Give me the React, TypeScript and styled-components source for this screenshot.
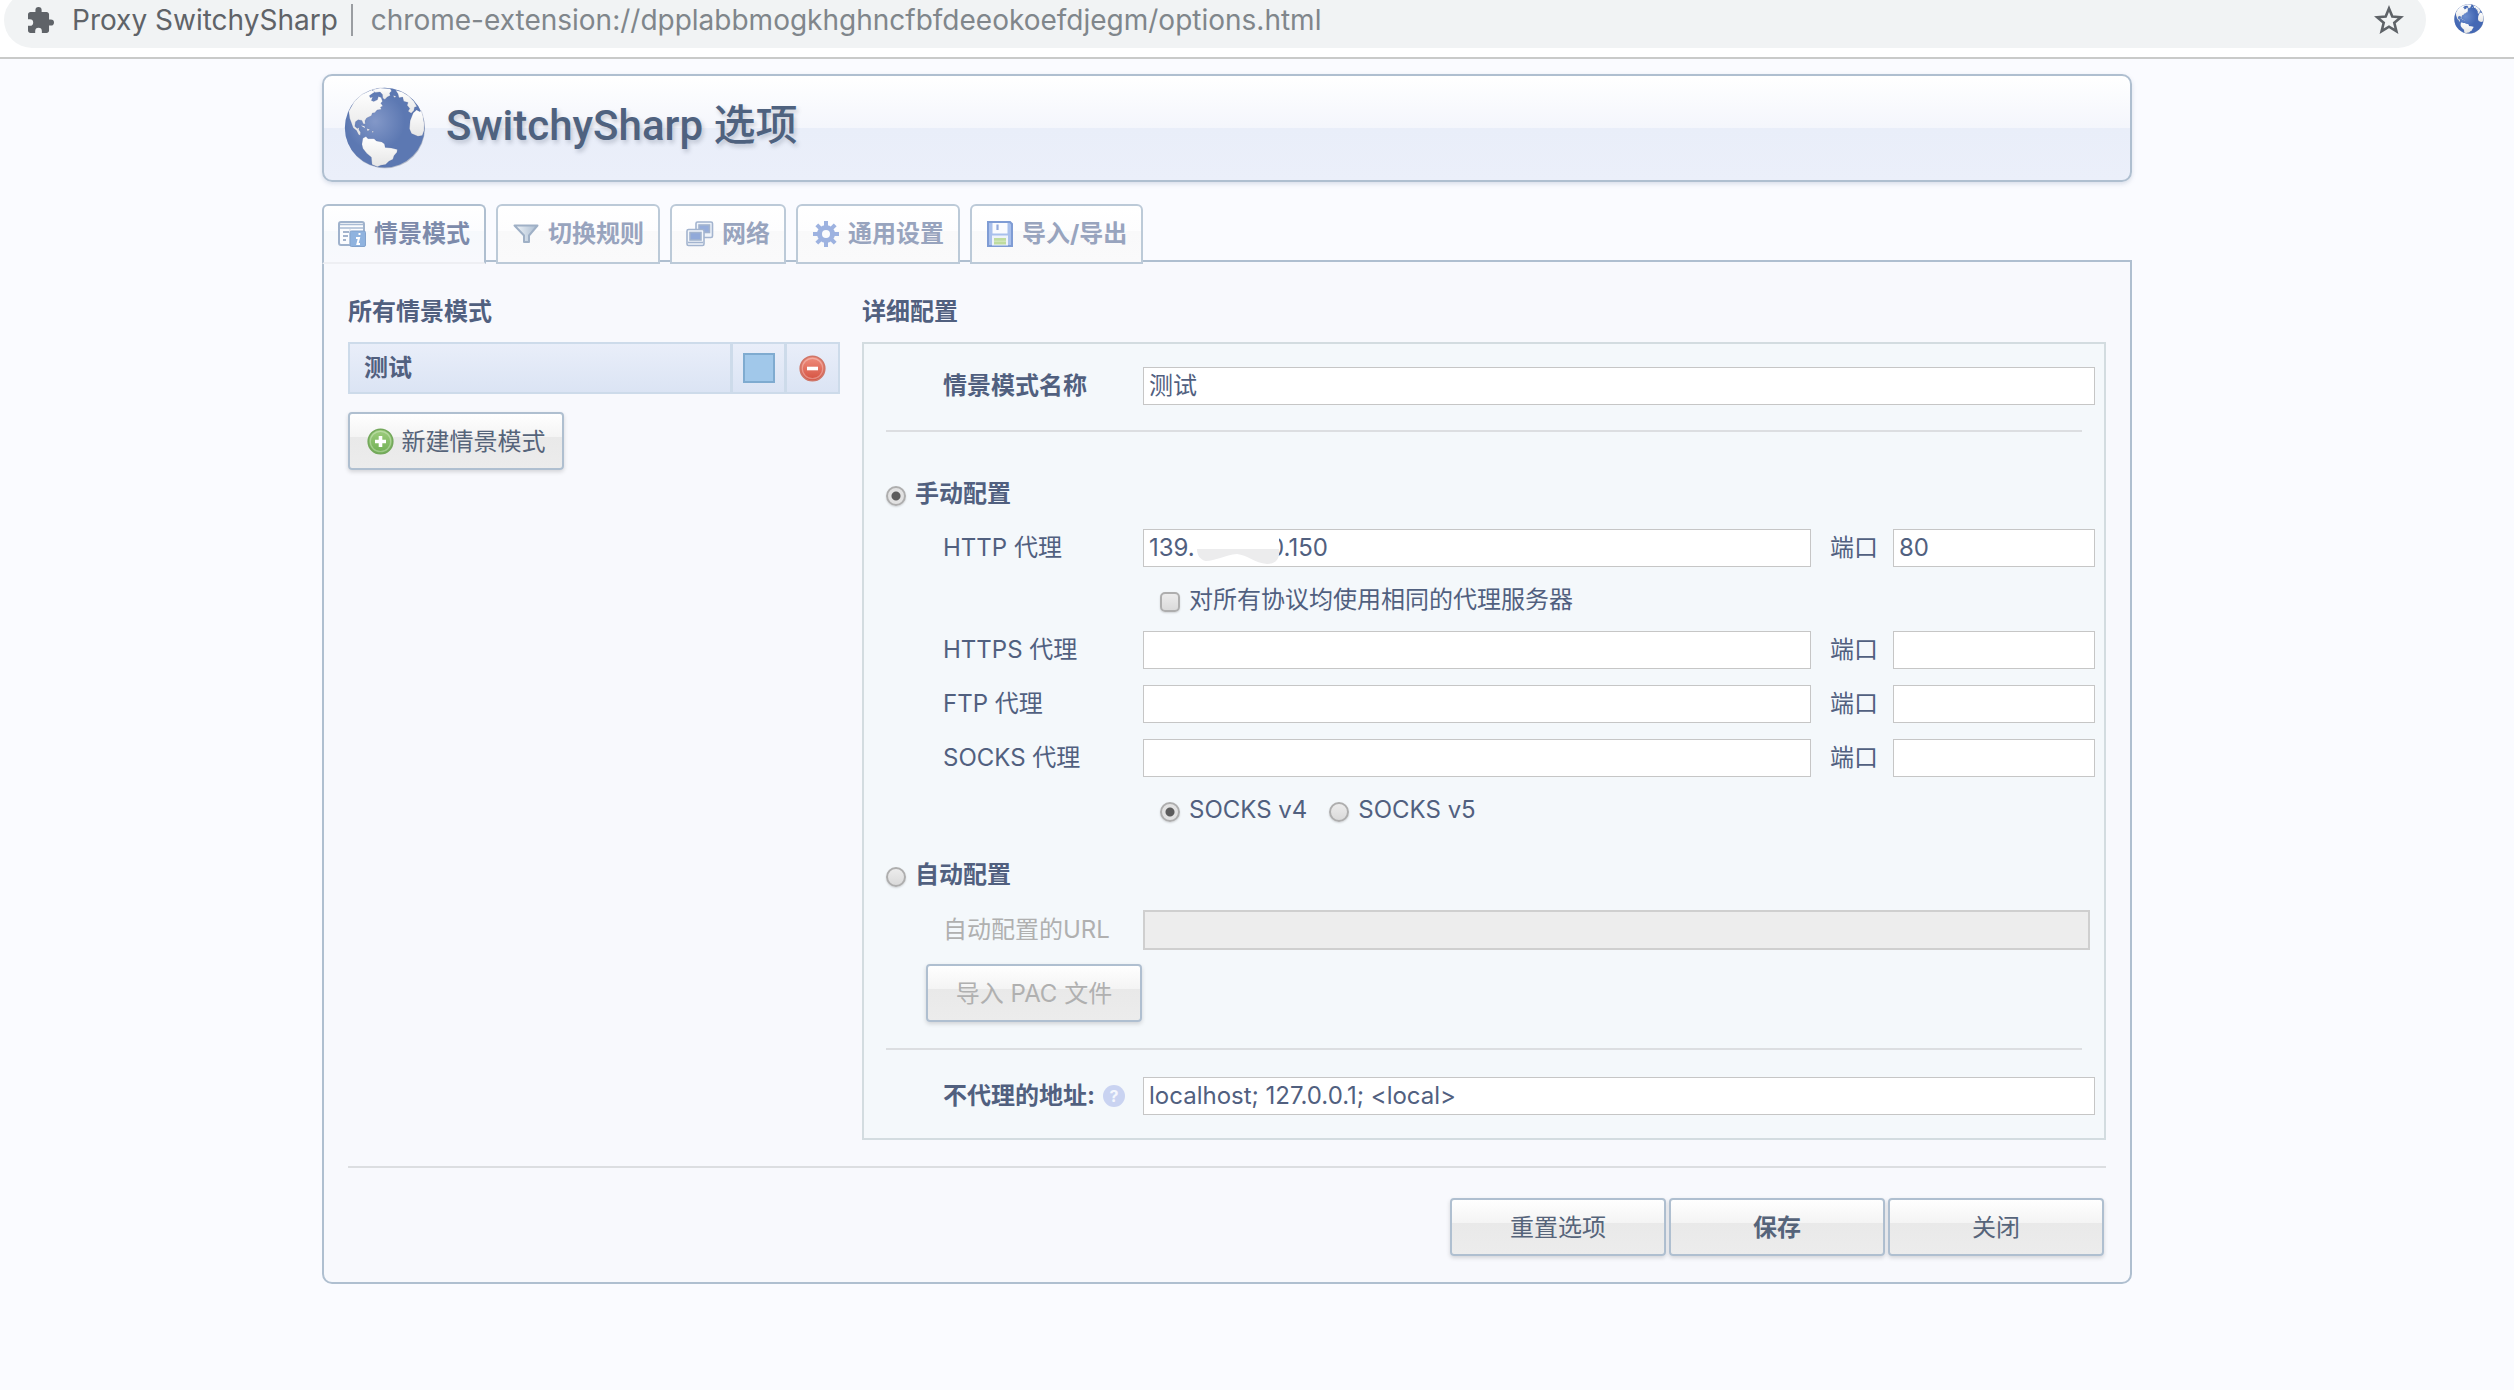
import React, { useState } from "react";
import styled, { createGlobalStyle, css } from "styled-components";

const color = {
  page: "#fafbff",
  panel: "#f8f9fd",
  box: "#f4f8fb",
  line: "#afbfd0",
  rule: "#dcdee1",
  text: "#51607f",
  muted: "#b0b0b0",
};

const Global = createGlobalStyle`
  *, *::before, *::after { box-sizing: border-box; }
  body {
    margin: 0;
    background: ${color.page};
    color: ${color.text};
    font: 24px/38px Inter, "Noto Sans CJK SC", sans-serif;
  }
  button, input { font: inherit; color: inherit; }
`;

/* ---------- browser bar ---------- */

const Toolbar = styled.header`
  display: flex;
  align-items: flex-start;
  height: 59px;
  padding: 0 30px 0 4px;
  gap: 28px;
  overflow: hidden;
  background: #fff;
  border-bottom: 2px solid #c9cac9;
`;

const Omnibox = styled.div`
  flex: 1;
  display: flex;
  align-items: center;
  height: 56px;
  margin-top: -8px;
  padding: 0 22px 0 24px;
  border-radius: 28px;
  background: #f1f3f4;
  color: #5f6368;
  font-size: 28px;
`;

const SiteName = styled.span`
  padding: 0 13px 0 18px;
  white-space: nowrap;
`;

const Address = styled.span`
  flex: 1;
  padding-left: 18px;
  border-left: 2px solid #9a9da1;
  color: #80868b;
  line-height: 32px;
`;

const IconButton = styled.button`
  display: flex;
  align-items: center;
  justify-content: center;
  padding: 0;
  border: 0;
  background: none;
  cursor: pointer;
`;

const ExtensionButton = styled(IconButton)`
  height: 38px;
`;

/* ---------- page ---------- */

const Page = styled.main`
  padding: 15px 382px 106px 322px;
`;

const Banner = styled.div`
  display: flex;
  align-items: center;
  gap: 20px;
  height: 108px;
  padding: 0 20px;
  border: 2px solid ${color.line};
  border-radius: 10px;
  background: linear-gradient(#fff, #f4f6fc 50%, #e9eef9 50%, #ebeffa);
  box-shadow: 0 2px 4px rgba(120, 140, 170, 0.25);
`;

const Title = styled.h1`
  margin: 0 0 4px;
  font: 500 42px/60px Roboto, "Noto Sans CJK SC", sans-serif;
  color: #4f627f;
  text-shadow: 2px 3px 4px rgba(80, 90, 110, 0.28);
`;

const Tabs = styled.div`
  position: relative;
  display: flex;
  gap: 10px;
  margin: 22px 0 -4px;
`;

const Tab = styled.button<{ $active: boolean }>`
  display: flex;
  align-items: center;
  gap: 8px;
  height: 60px;
  padding: 0 14px;
  border: 2px solid #bccad8;
  border-radius: 6px 6px 0 0;
  background: linear-gradient(#fff, #fdfdfe 45%, #f9f9fa 45%, #fafafb);
  color: #98a4be;
  font-weight: 700;
  cursor: pointer;
  ${(p) =>
    p.$active &&
    css`
      border-color: ${color.line};
      border-bottom-color: #eeeff3;
      background: linear-gradient(#fff, #fbfcfe 45%, #f6f9fc 45%, ${color.panel});
      color: #7d8bab;
    `}
`;

const Panel = styled.section`
  padding: 30px 24px 26px;
  border: 2px solid ${color.line};
  border-radius: 0 0 10px 10px;
  background: ${color.panel};
`;

const Columns = styled.div`
  display: grid;
  grid-template-columns: 492px minmax(0, 1fr);
  gap: 22px;
  align-items: start;
`;

const Heading = styled.h2`
  margin: 0 0 10px;
  font-size: 24px;
  line-height: 40px;
  font-weight: 700;
`;

const Rule = styled.hr<{ $top: number; $bottom: number }>`
  height: 2px;
  margin: ${(p) => p.$top}px 0 ${(p) => p.$bottom}px;
  border: 0;
  background: ${color.rule};
`;

/* ---------- profile list ---------- */

const ProfileRow = styled.div`
  display: flex;
  height: 52px;
  margin-bottom: 18px;
  border: 2px solid #cddbea;
  background: linear-gradient(#e9eef9, #dbe4f4);
`;

const ProfileName = styled.div`
  flex: 1;
  padding: 0 14px;
  line-height: 48px;
  font-weight: 700;
`;

const ProfileCell = styled.div`
  display: flex;
  align-items: center;
  justify-content: center;
  width: 54px;
  border-left: 3px solid #cddbea;
`;

const Swatch = styled.button`
  width: 32px;
  height: 30px;
  padding: 0;
  border: 2px solid #7fabd0;
  background: #a1c8ea;
  cursor: pointer;
`;

const Button = styled.button<{ $strong?: boolean }>`
  display: flex;
  align-items: center;
  justify-content: center;
  gap: 8px;
  width: 216px;
  height: 58px;
  padding: 1px 0 0;
  border: 2px solid ${color.line};
  border-radius: 4px;
  background: linear-gradient(#fff, #f4f4f4 42%, #e9e9e9 42%, #ececec);
  box-shadow: 0 2px 4px rgba(0, 0, 0, 0.15);
  color: #56647a;
  font-weight: ${(p) => (p.$strong ? 700 : 400)};
  cursor: pointer;
  &:disabled {
    color: ${color.muted};
    cursor: default;
  }
`;

/* ---------- profile details ---------- */

const Details = styled.form`
  padding: 23px 9px 23px 22px;
  border: 2px solid #d3dce0;
  background: ${color.box};
  & > hr {
    margin-right: 13px;
  }
`;

const Row = styled.div<{ $port?: boolean }>`
  display: grid;
  grid-template-columns: ${(p) => (p.$port ? "200px minmax(0, 1fr) 82px 202px" : "200px minmax(0, 1fr)")};
  align-items: center;
  margin-bottom: ${(p) => (p.$port ? 16 : 0)}px;
  padding-left: 57px;
`;

const Label = styled.label<{ $strong?: boolean; $muted?: boolean }>`
  font-weight: ${(p) => (p.$strong ? 700 : 400)};
  color: ${(p) => (p.$muted ? color.muted : color.text)};
  white-space: nowrap;
`;

const PortLabel = styled(Label)`
  padding-left: 19px;
`;

const LabelGroup = styled.div`
  display: flex;
  align-items: center;
  gap: 8px;
`;

const Help = styled.button`
  width: 22px;
  height: 22px;
  padding: 0;
  border: 0;
  border-radius: 50%;
  background: #c9d3f1;
  color: #f4f7fd;
  font-size: 16px;
  line-height: 22px;
  font-weight: 700;
  cursor: help;
`;

const TextInput = styled.input`
  width: 100%;
  height: 38px;
  padding: 0 5px;
  border: 1px solid #c6c6c6;
  border-radius: 0;
  background: #fff;
  outline: 0;
  &:disabled {
    height: 40px;
    border: 2px solid #cfcfcf;
    background: #ededed;
  }
`;

const UrlRow = styled(Row)`
  margin: 16px 0 14px;
  padding-right: 5px;
`;

const Masked = styled.div`
  position: relative;
  display: flex;
`;

const Smudge = styled.svg`
  position: absolute;
  left: 54px;
  top: 5px;
`;

const ModeRow = styled.div<{ $top: number }>`
  display: flex;
  align-items: center;
  gap: 9px;
  margin: ${(p) => p.$top}px 0 16px;
`;

const ChoiceRow = styled.div`
  display: flex;
  gap: 22px;
  height: 34px;
  margin-bottom: 14px;
  padding-left: 274px;
  line-height: 34px;
`;

const Choice = styled.div`
  display: flex;
  align-items: center;
  gap: 9px;
`;

const tick = css`
  appearance: none;
  flex: none;
  width: 20px;
  height: 20px;
  margin: 4px 0 0;
  border: 2px solid #aeaeae;
  background: linear-gradient(#ececec, #dadada);
  box-shadow: 0 1px 2px rgba(0, 0, 0, 0.15);
`;

const Radio = styled.input.attrs({ type: "radio" })`
  ${tick}
  border-radius: 50%;
  &:checked {
    background: radial-gradient(circle, #5c5c5c 4px, #e2e2e2 5px);
  }
`;

const Checkbox = styled.input.attrs({ type: "checkbox" })`
  ${tick}
  border-radius: 5px;
  &:checked {
    background: #8d8d8d;
  }
`;

const ImportButton = styled(Button)`
  margin-left: 40px;
`;

const Actions = styled.div`
  display: flex;
  justify-content: flex-end;
  gap: 3px;
  padding-right: 2px;
`;

/* ---------- drawings ---------- */

function Globe({ size, id, tone }: { size: number; id: string; tone: [string, string] }) {
  return (
    <svg width={size} height={size} viewBox="43 24 243 243" aria-hidden="true">
      <defs>
        <radialGradient id={id} cx="38%" cy="42%" r="62%">
          <stop offset="0" stopColor={tone[0]} />
          <stop offset="0.6" stopColor={tone[1]} />
          <stop offset="1" stopColor={tone[1]} />
        </radialGradient>
        <linearGradient id={id + "-land"} x1="0" y1="0" x2="0" y2="1">
          <stop offset="0" stopColor="#fff" />
          <stop offset="1" stopColor="#e6e6e6" />
        </linearGradient>
      </defs>
      <circle cx="165" cy="147" r="118" fill="#8b94a8" opacity="0.6" />
      <circle cx="163.500" cy="144.500" r="118" fill={`url(#${id})`} />
      <g fill={`url(#${id}-land)`} stroke="#46588a" strokeOpacity="0.35" strokeWidth="1.500">
        <path d="M57 96 74 66 96 46 124 33 137 37 126 44 118 50 121 56 128 54 124 64 131 67 142 62 145 52 153 55 157 66 152 72 158 80 151 84 154 90 141 92 134 100 127 101 124 109 110 116 105 124 106 134 100 133 96 123 85 121 77 127 75 140 82 147 88 144 87 151 92 158 91 168 86 165 80 153 70 145 64 128 60 117Z" />
        <path d="M126 32 150 27 180 29 184 36 178 42 180 49 171 54 164 61 158 57 157 46 150 39 136 40Z" />
        <path d="M196 34 214 38 234 50 250 66 259 82 252 84 250 94 242 102 233 96 238 88 230 78 233 70 220 66 217 54 206 56 203 44Z" />
        <path d="M188 50 197 51 194 56Z" />
        <path d="M248 101 258 92 268 97 272 94 277 110 281 135 280 154 275 168 262 170 243 162 237 148 239 124Z" />
        <path d="M99 176 108 171 114 177 132 177 139 184 155 187 163 193 165 203 183 205 201 209 200 217 191 228 188 238 176 244 166 254 152 256 142 260 126 254 124 232 110 220 99 206 96 194Z" />
        <path d="M93 137 104 140 106 146 98 142ZM110 147 120 150 113 155ZM125 154 131 156 128 160Z" />
      </g>
    </svg>
  );
}

const PuzzleIcon = () => (
  <svg width="26" height="26" viewBox="2 1 21 21" fill="#5f6368" aria-hidden="true">
    <path d="M20.500 11H19V7c0-1.100-.9-2-2-2h-4V3.500a2.500 2.500 0 0 0-5 0V5H4c-1.100 0-2 .9-2 2v3.800h1.500a2.700 2.700 0 0 1 0 5.400H2V20c0 1.100.9 2 2 2h3.800v-1.500a2.700 2.700 0 0 1 5.400 0V22H17c1.100 0 2-.9 2-2v-4h1.500a2.500 2.500 0 0 0 0-5z" />
  </svg>
);

const StarIcon = () => (
  <svg width="30" height="30" viewBox="0 0 30 30" aria-hidden="true">
    <path
      d="M15 3.500l3.300 8 8.600.7-6.600 5.600 2.100 8.400L15 21.700l-7.400 4.500 2.100-8.400-6.600-5.600 8.600-.7z"
      fill="none"
      stroke="#5f6368"
      strokeWidth="2.600"
    />
  </svg>
);

const ProfileIcon = () => (
  <svg width="28" height="26" viewBox="0 0 28 26" aria-hidden="true">
    <rect x="1" y="1" width="25" height="23" rx="2" fill="#fbfcfe" stroke="#9fb2cc" strokeWidth="2" />
    <path d="M2 3.500h23M2 7h23" stroke="#a9bbd4" strokeWidth="1.500" />
    <path d="M5 11h6M5 15h5M5 19h3" stroke="#a3b3cc" strokeWidth="1.800" />
    <path d="M12 8v16" stroke="#cdd8e6" />
    <rect x="12" y="10" width="15.500" height="15.500" rx="1.500" fill="#8fb3df" stroke="#83a3cc" />
    <path d="M20.500 13h2M18 17h3l-1.600 6h2.600" fill="none" stroke="#fff" strokeWidth="2" />
  </svg>
);

const FilterIcon = () => (
  <svg width="28" height="26" viewBox="0 0 28 26" aria-hidden="true">
    <defs>
      <linearGradient id="funnel">
        <stop offset="0" stopColor="#f2f6fa" />
        <stop offset="1" stopColor="#a9bbd0" />
      </linearGradient>
    </defs>
    <path d="M2.500 4.500h23l-8.500 10V21h-5v-6.500z" fill="url(#funnel)" stroke="#9fb0c6" strokeWidth="2" strokeLinejoin="round" />
  </svg>
);

const NetworkIcon = () => (
  <svg width="28" height="26" viewBox="0 0 28 26" aria-hidden="true">
    <g stroke="#a3b4cf" strokeWidth="1.600">
      <rect x="10" y="1" width="16.500" height="15.500" rx="1.500" fill="#f0f4fa" />
      <rect x="13" y="4" width="10.500" height="7.500" fill="#96addb" />
      <rect x="1" y="8.500" width="17" height="16" rx="1.500" fill="#f4f7fb" />
      <rect x="4" y="11.500" width="11" height="7.500" fill="#91a9d9" />
      <path d="M2 21.500h15" />
    </g>
  </svg>
);

const GearIcon = () => (
  <svg width="28" height="28" viewBox="-14 -14 28 28" aria-hidden="true">
    {[0, 45, 90, 135].map((a) => (
      <path key={a} d="M-2-13h4v26h-4z" fill="#9db2e0" transform={`rotate(${a})`} />
    ))}
    <circle r="9" fill="#9db2e0" />
    <circle r="4" fill="#fbfbfd" />
  </svg>
);

const DiskIcon = () => (
  <svg width="28" height="26" viewBox="0 0 28 26" aria-hidden="true">
    <path d="M2 1h22l2 2v22H2z" fill="#a9c0ec" stroke="#7f9cd4" strokeWidth="2" />
    <rect x="6.500" y="2" width="15" height="10.500" fill="#fafbfe" />
    <path d="M11.500 3.500v5.500" stroke="#93aadd" strokeWidth="2.200" />
    <rect x="6" y="14.500" width="16" height="10" fill="#eef3fb" />
    <path d="M8 17h12v6.500H8z" fill="#bfdc9f" />
    <path d="M8 20.200h12" stroke="#d5e9c0" strokeWidth="1.200" />
  </svg>
);

function RoundIcon({ plus }: { plus?: boolean }) {
  const id = plus ? "disc-add" : "disc-remove";
  return (
    <svg width="27" height="27" viewBox="0 0 27 27" aria-hidden="true">
      <defs>
        <linearGradient id={id} x1="0" y1="0" x2="0" y2="1">
          <stop offset="0" stopColor={plus ? "#9fce7f" : "#f09080"} />
          <stop offset="1" stopColor={plus ? "#6fae52" : "#d4503f"} />
        </linearGradient>
      </defs>
      <circle cx="13.500" cy="13.500" r="12.300" fill={`url(#${id})`} stroke={plus ? "#74a85c" : "#cf7668"} strokeWidth="1.600" />
      <circle cx="13.500" cy="13.500" r="10.200" fill="none" stroke="#fff" strokeOpacity="0.3" strokeWidth="1.200" />
      <path d={plus ? "M13.500 8v11M8 13.500h11" : "M8 13.500h11"} stroke="#fff" strokeWidth="3.600" />
    </svg>
  );
}

/* ---------- app ---------- */

const tabs = [
  { name: "情景模式", icon: <ProfileIcon /> },
  { name: "切换规则", icon: <FilterIcon /> },
  { name: "网络", icon: <NetworkIcon /> },
  { name: "通用设置", icon: <GearIcon /> },
  { name: "导入/导出", icon: <DiskIcon /> },
];

function ProxyRow({ id, label, children, port }: { id: string; label: string; children?: React.ReactNode; port?: string }) {
  return (
    <Row $port>
      <Label htmlFor={id}>{label}</Label>
      {children ?? <TextInput id={id} />}
      <PortLabel htmlFor={id + "-port"}>端口</PortLabel>
      <TextInput id={id + "-port"} defaultValue={port} />
    </Row>
  );
}

export default function App() {
  const [active, setActive] = useState(0);

  return (
    <>
      <Global />
      <Toolbar>
        <Omnibox>
          <PuzzleIcon />
          <SiteName>Proxy SwitchySharp</SiteName>
          <Address>chrome-extension://dpplabbmogkhghncfbfdeeokoefdjegm/options.html</Address>
          <IconButton aria-label="Bookmark">
            <StarIcon />
          </IconButton>
        </Omnibox>
        <ExtensionButton aria-label="SwitchySharp">
          <Globe size={30} id="globe-small" tone={["#6d8fcf", "#4468b4"]} />
        </ExtensionButton>
      </Toolbar>

      <Page>
        <Banner>
          <Globe size={82} id="globe" tone={["#8398c8", "#5c78b2"]} />
          <Title>SwitchySharp 选项</Title>
        </Banner>

        <Tabs role="tablist">
          {tabs.map((t, i) => (
            <Tab key={t.name} role="tab" aria-selected={i === active} $active={i === active} onClick={() => setActive(i)}>
              {t.icon}
              {t.name}
            </Tab>
          ))}
        </Tabs>

        <Panel>
          <Columns>
            <div>
              <Heading>所有情景模式</Heading>
              <ProfileRow>
                <ProfileName>测试</ProfileName>
                <ProfileCell>
                  <Swatch aria-label="颜色" />
                </ProfileCell>
                <ProfileCell>
                  <IconButton aria-label="删除">
                    <RoundIcon />
                  </IconButton>
                </ProfileCell>
              </ProfileRow>
              <Button>
                <RoundIcon plus />
                新建情景模式
              </Button>
            </div>

            <div>
              <Heading>详细配置</Heading>
              <Details onSubmit={(e) => e.preventDefault()}>
                <Row>
                  <Label htmlFor="name" $strong>
                    情景模式名称
                  </Label>
                  <TextInput id="name" defaultValue="测试" />
                </Row>
                <Rule $top={25} $bottom={0} />

                <ModeRow $top={43}>
                  <Radio id="manual" name="mode" defaultChecked />
                  <Label htmlFor="manual" $strong>
                    手动配置
                  </Label>
                </ModeRow>
                <ProxyRow id="http" label="HTTP 代理" port="80">
                  <Masked>
                    <TextInput id="http" defaultValue={"139." + " ".repeat(11) + "0.150"} />
                    <Smudge width="84" height="31" viewBox="0 0 84 31" aria-hidden="true">
                      <path d="M2 0H82V16H0V4Z" fill="#fff" />
                      <path d="M0 15H82C83 24 80 30 70 30C58 29 50 21 40 20C28 21 18 27 9 27C3 26 0 21 0 15Z" fill="#ececed" />
                    </Smudge>
                  </Masked>
                </ProxyRow>
                <ChoiceRow>
                  <Choice>
                    <Checkbox id="same" />
                    <Label htmlFor="same">对所有协议均使用相同的代理服务器</Label>
                  </Choice>
                </ChoiceRow>
                <ProxyRow id="https" label="HTTPS 代理" />
                <ProxyRow id="ftp" label="FTP 代理" />
                <ProxyRow id="socks" label="SOCKS 代理" />
                <ChoiceRow>
                  <Choice>
                    <Radio id="v4" name="socks-version" defaultChecked />
                    <Label htmlFor="v4">SOCKS v4</Label>
                  </Choice>
                  <Choice>
                    <Radio id="v5" name="socks-version" />
                    <Label htmlFor="v5">SOCKS v5</Label>
                  </Choice>
                </ChoiceRow>

                <ModeRow $top={29}>
                  <Radio id="auto" name="mode" />
                  <Label htmlFor="auto" $strong>
                    自动配置
                  </Label>
                </ModeRow>
                <UrlRow>
                  <Label htmlFor="pac" $muted>
                    自动配置的URL
                  </Label>
                  <TextInput id="pac" disabled />
                </UrlRow>
                <ImportButton type="button" disabled>
                  导入 PAC 文件
                </ImportButton>
                <Rule $top={26} $bottom={27} />

                <Row>
                  <LabelGroup>
                    <Label htmlFor="bypass" $strong>
                      不代理的地址:
                    </Label>
                    <Help type="button">?</Help>
                  </LabelGroup>
                  <TextInput id="bypass" defaultValue="localhost; 127.0.0.1; <local>" />
                </Row>
              </Details>
            </div>
          </Columns>

          <Rule $top={26} $bottom={30} />
          <Actions>
            <Button>重置选项</Button>
            <Button $strong>保存</Button>
            <Button>关闭</Button>
          </Actions>
        </Panel>
      </Page>
    </>
  );
}
